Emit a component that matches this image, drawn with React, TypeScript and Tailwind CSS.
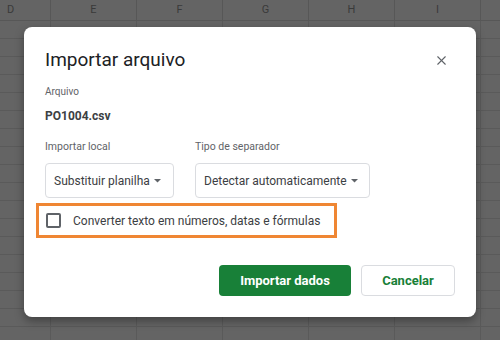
import { X } from 'lucide-react';

const columns = [
  { label: 'D', width: 'w-[51px]', align: 'justify-start pl-[7px]' },
  { label: 'E', width: 'w-[86px]', align: 'justify-center' },
  { label: 'F', width: 'w-[86px]', align: 'justify-center' },
  { label: 'G', width: 'w-[86px]', align: 'justify-center' },
  { label: 'H', width: 'w-[86px]', align: 'justify-center' },
  { label: 'I', width: 'w-[86px]', align: 'justify-center' },
  { label: '', width: 'w-[40px]', align: 'justify-center' },
];

const rows = Array.from({ length: 18 }, (_, i) => i);

function Caret() {
  return (
    <svg width="7" height="4" viewBox="0 0 7 4" className="shrink-0">
      <path d="M0 0 L7 0 L3.5 3.5 Z" fill="#5f6368" />
    </svg>
  );
}

export default function App() {
  return (
    <div className="relative w-[500px] h-[340px] overflow-hidden bg-[#646464] font-['Roboto',sans-serif]">
      {/* Spreadsheet behind the dialog */}
      <div className="flex flex-col">
        <div className="flex h-[21px] border-b border-[#575757]">
          {columns.map((c, i) => (
            <div
              key={i}
              className={`${c.width} shrink-0 flex items-center ${c.align} border-r border-[#575757] text-[11px] text-[#3a3a3a]`}
            >
              {c.label}
            </div>
          ))}
        </div>
        {rows.map((r) => (
          <div key={r} className="flex h-[18px] border-b border-[#5a5a5a]">
            {columns.map((c, i) => (
              <div key={i} className={`${c.width} shrink-0 border-r border-[#5a5a5a]`} />
            ))}
          </div>
        ))}
      </div>

      {/* Dialog */}
      <div className="absolute left-[24px] top-[27px] w-[452px] h-[290px] bg-white rounded-lg shadow-[0_4px_10px_rgba(0,0,0,0.35)] px-[21px] pt-[21px] pb-[21px] flex flex-col whitespace-nowrap">
        <div className="flex items-center justify-between h-[24px]">
          <h2 className="text-[19px] leading-[24px] text-[#202124]">Importar arquivo</h2>
          <button className="w-7 h-7 flex items-center justify-center text-[#5f6368]">
            <X size={15} strokeWidth={1.75} />
          </button>
        </div>

        <div className="mt-[12px] text-[10px] leading-[16px] text-[#5f6368]">Arquivo</div>
        <div className="mt-[8px] text-[12px] leading-[16px] font-bold text-[#3c4043]">PO1004.csv</div>

        <div className="mt-[15px] flex gap-[21px]">
          <div className="flex flex-col">
            <div className="text-[10.5px] leading-[16px] text-[#5f6368]">Importar local</div>
            <div className="mt-[8px] h-[35px] w-[129px] border border-[#dadce0] rounded flex items-center justify-between pl-[8px] pr-[12px] text-[12px] text-[#3c4043]">
              <span>Substituir planilha</span>
              <Caret />
            </div>
          </div>
          <div className="flex flex-col">
            <div className="text-[10.5px] leading-[16px] text-[#5f6368]">Tipo de separador</div>
            <div className="mt-[8px] h-[35px] w-[175px] border border-[#dadce0] rounded flex items-center justify-between pl-[8px] pr-[11px] text-[12px] text-[#3c4043]">
              <span>Detectar automaticamente</span>
              <Caret />
            </div>
          </div>
        </div>

        <div className="mt-[5px] -ml-[9px] w-[301px] h-[35px] border-[3px] border-[#ef8633] flex items-center pl-[7px] gap-[12px]">
          <div className="w-[15px] h-[15px] shrink-0 border-2 border-[#5f6368] rounded-[2px]" />
          <span className="text-[12px] text-[#3c4043]">Converter texto em números, datas e fórmulas</span>
        </div>

        <div className="mt-auto flex justify-end gap-[10px]">
          <button className="w-[132px] h-[31px] rounded bg-[#188038] text-white text-[13px] font-bold">
            Importar dados
          </button>
          <button className="w-[94px] h-[31px] rounded border border-[#dadce0] text-[#188038] text-[13px] font-bold">
            Cancelar
          </button>
        </div>
      </div>
    </div>
  );
}
